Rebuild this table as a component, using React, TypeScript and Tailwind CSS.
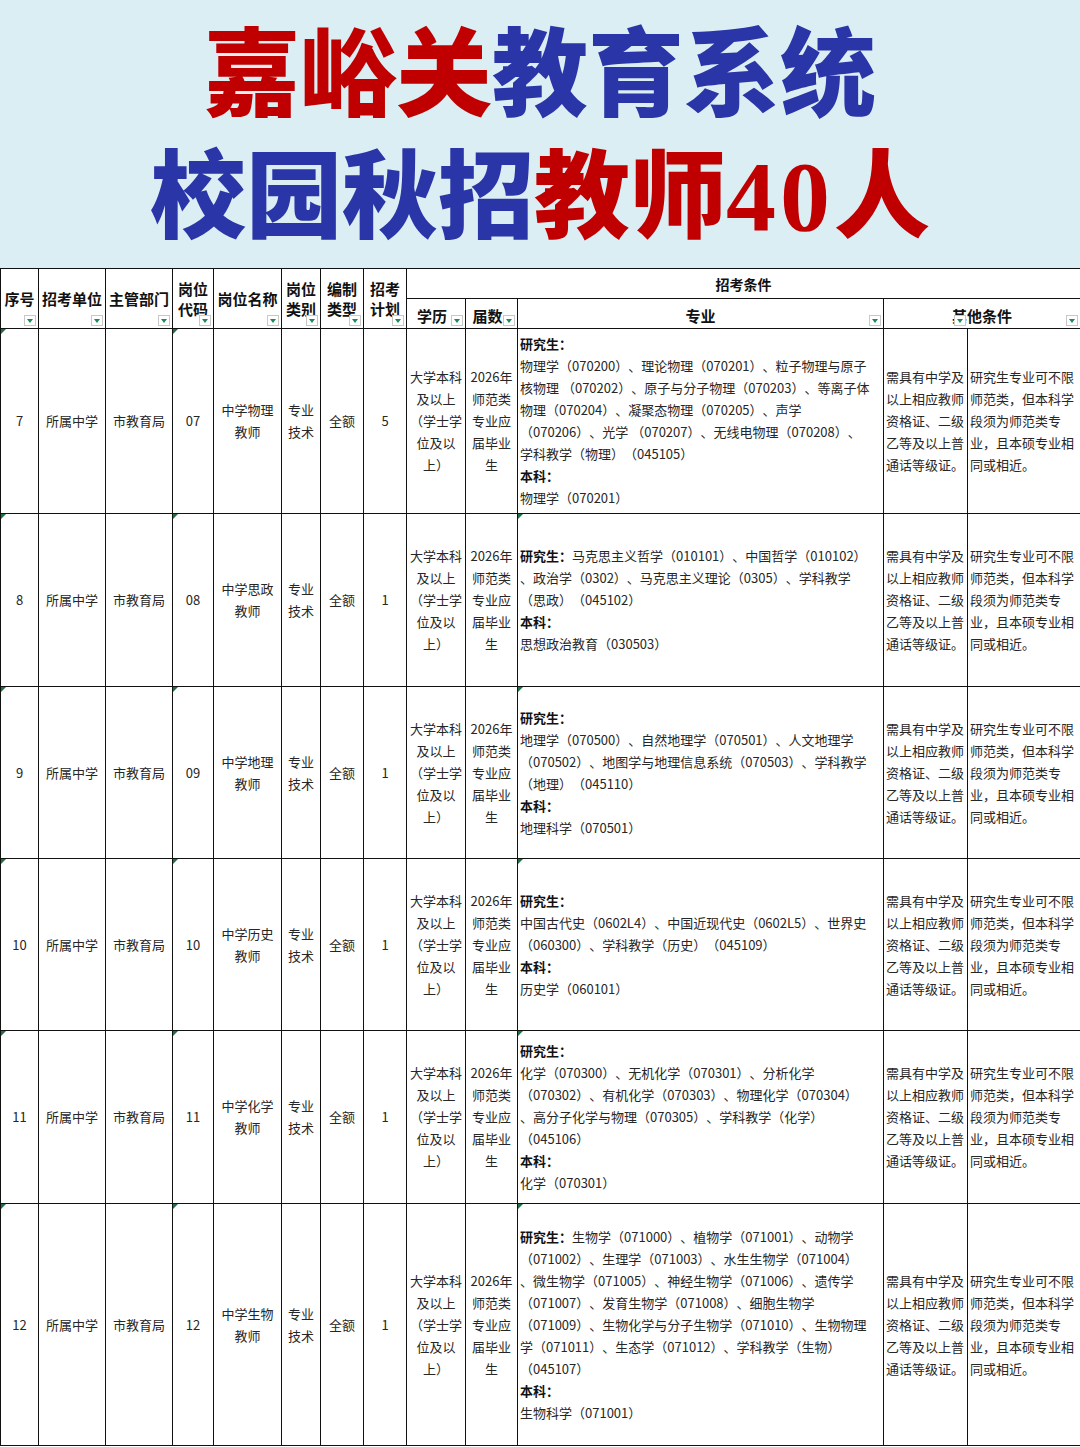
import React from "react";

type Seg = { b?: string; t?: string };

const Filter = () => (
  <span className="absolute right-[2px] bottom-[2px] w-[12px] h-[11px] bg-white border border-[#c8c8c8] flex items-center justify-center">
    <span className="w-0 h-0 border-l-[3px] border-r-[3px] border-t-[4px] border-l-transparent border-r-transparent border-t-[#1e8a5a]" />
  </span>
);

const Corner = () => (
  <span className="absolute left-0 top-0 w-0 h-0 border-t-[5px] border-r-[5px] border-t-[#1e7145] border-r-transparent" />
);

const rows: {
  no: string;
  code: string;
  name: string;
  plan: string;
  h: string;
  corner: boolean;
  major: Seg[];
}[] = [
  {
    no: "7",
    code: "07",
    name: "中学物理",
    plan: "5",
    h: "h-[185px]",
    corner: false,
    major: [
      { b: "研究生：" },
      { t: "物理学（070200）、理论物理（070201）、粒子物理与原子" },
      { t: "核物理 （070202）、原子与分子物理（070203）、等离子体" },
      { t: "物理（070204）、凝聚态物理（070205）、声学" },
      { t: "（070206）、光学 （070207）、无线电物理（070208）、" },
      { t: "学科教学（物理）（045105）" },
      { b: "本科：" },
      { t: "物理学（070201）" },
    ],
  },
  {
    no: "8",
    code: "08",
    name: "中学思政",
    plan: "1",
    h: "h-[173px]",
    corner: true,
    major: [
      { b: "研究生：", t: "马克思主义哲学（010101）、中国哲学（010102）" },
      { t: "、政治学（0302）、马克思主义理论（0305）、学科教学" },
      { t: "（思政）（045102）" },
      { b: "本科：" },
      { t: "思想政治教育（030503）" },
    ],
  },
  {
    no: "9",
    code: "09",
    name: "中学地理",
    plan: "1",
    h: "h-[172px]",
    corner: true,
    major: [
      { b: "研究生：" },
      { t: "地理学（070500）、自然地理学（070501）、人文地理学" },
      { t: "（070502）、地图学与地理信息系统（070503）、学科教学" },
      { t: "（地理）（045110）" },
      { b: "本科：" },
      { t: "地理科学（070501）" },
    ],
  },
  {
    no: "10",
    code: "10",
    name: "中学历史",
    plan: "1",
    h: "h-[172px]",
    corner: true,
    major: [
      { b: "研究生：" },
      { t: "中国古代史（0602L4）、中国近现代史（0602L5）、世界史" },
      { t: "（060300）、学科教学（历史）（045109）" },
      { b: "本科：" },
      { t: "历史学（060101）" },
    ],
  },
  {
    no: "11",
    code: "11",
    name: "中学化学",
    plan: "1",
    h: "h-[173px]",
    corner: true,
    major: [
      { b: "研究生：" },
      { t: "化学（070300）、无机化学（070301）、分析化学" },
      { t: "（070302）、有机化学（070303）、物理化学（070304）" },
      { t: "、高分子化学与物理（070305）、学科教学（化学）" },
      { t: "（045106）" },
      { b: "本科：" },
      { t: "化学（070301）" },
    ],
  },
  {
    no: "12",
    code: "12",
    name: "中学生物",
    plan: "1",
    h: "h-[242px]",
    corner: true,
    major: [
      { b: "研究生：", t: "生物学（071000）、植物学（071001）、动物学" },
      { t: "（071002）、生理学（071003）、水生生物学（071004）" },
      { t: "、微生物学（071005）、神经生物学（071006）、遗传学" },
      { t: "（071007）、发育生物学（071008）、细胞生物学" },
      { t: "（071009）、生物化学与分子生物学（071010）、生物物理" },
      { t: "学（071011）、生态学（071012）、学科教学（生物）" },
      { t: "（045107）" },
      { b: "本科：" },
      { t: "生物科学（071001）" },
    ],
  },
];

const edu = ["大学本科", "及以上", "（学士学", "位及以", "上）"];
const grad = ["2026年", "师范类", "专业应", "届毕业", "生"];
const other1 = ["需具有中学及", "以上相应教师", "资格证、二级", "乙等及以上普", "通话等级证。"];
const other2 = ["研究生专业可不限", "师范类，但本科学", "段须为师范类专", "业，且本硕专业相", "同或相近。"];

const td = "relative border border-[#111] p-0 align-middle";
const th = "relative border border-[#111] p-0 align-middle font-bold text-[15px] leading-[20px] text-[#111]";

export default function App() {
  return (
    <div className="w-[1080px] h-[1447px] bg-white overflow-hidden font-['Noto_Sans_CJK_SC','Noto_Sans',sans-serif]">
      <div className="h-[268px] bg-[#dbeef3] flex flex-col items-center pt-[6px]">
        <div className="h-[122px] text-[96px] leading-[122px] font-black whitespace-nowrap">
          <span className="text-[#c00000]">嘉峪关</span>
          <span className="text-[#2a35a8]">教育系统</span>
        </div>
        <div className="h-[122px] text-[96px] leading-[122px] font-black whitespace-nowrap">
          <span className="text-[#2a35a8]">校园秋招</span>
          <span className="text-[#c00000]">
            教师
            <span className="font-['Liberation_Serif','Times_New_Roman',serif] font-bold text-[100px] tracking-[4px]">40</span>
            人
          </span>
        </div>
      </div>
      <table className="table-fixed border-collapse w-[1080px] text-[13px] leading-[22px] text-[#262626] [text-spacing-trim:space-all]">
        <colgroup>
          <col className="w-[38px]" />
          <col className="w-[67px]" />
          <col className="w-[67px]" />
          <col className="w-[41px]" />
          <col className="w-[68px]" />
          <col className="w-[39px]" />
          <col className="w-[43px]" />
          <col className="w-[43px]" />
          <col className="w-[59px]" />
          <col className="w-[52px]" />
          <col className="w-[366px]" />
          <col className="w-[84px]" />
          <col className="w-[113px]" />
        </colgroup>
        <thead>
          <tr className="h-[30px]">
            <th rowSpan={2} className={th}>
              <div className="text-center">序号</div>
              <Filter />
            </th>
            <th rowSpan={2} className={th}>
              <div className="text-center">招考单位</div>
              <Filter />
            </th>
            <th rowSpan={2} className={th}>
              <div className="text-center">主管部门</div>
              <Filter />
            </th>
            <th rowSpan={2} className={th}>
              <div className="text-center">岗位<br />代码</div>
              <Filter />
            </th>
            <th rowSpan={2} className={th}>
              <div className="text-center">岗位名称</div>
              <Filter />
            </th>
            <th rowSpan={2} className={th}>
              <div className="text-center">岗位<br />类别</div>
              <Filter />
            </th>
            <th rowSpan={2} className={th}>
              <div className="text-center">编制<br />类型</div>
              <Filter />
            </th>
            <th rowSpan={2} className={th}>
              <div className="text-center">招考<br />计划</div>
              <Filter />
            </th>
            <th colSpan={5} className={th}>
              <div className="text-center text-[14px]">招考条件</div>
            </th>
          </tr>
          <tr className="h-[30px]">
            <th className={th}>
              <div className="pt-[4px] text-center pr-[8px]">学历</div>
              <Filter />
            </th>
            <th className={th}>
              <div className="pt-[4px] text-center pr-[8px]">届数</div>
              <Filter />
            </th>
            <th className={th}>
              <div className="pt-[4px] text-center">专业</div>
              <Filter />
            </th>
            <th colSpan={2} className={th}>
              <div className="pt-[4px] text-center">其他条件</div>
              <span className="absolute left-[70px] bottom-[2px] w-[12px] h-[11px] bg-white border border-[#c8c8c8] flex items-center justify-center">
                <span className="w-0 h-0 border-l-[3px] border-r-[3px] border-t-[4px] border-l-transparent border-r-transparent border-t-[#1e8a5a]" />
              </span>
              <Filter />
            </th>
          </tr>
        </thead>
        <tbody>
          {rows.map((r) => (
            <tr key={r.no} className={r.h}>
              <td className={td}>
                <Corner />
                <div className="text-center">{r.no}</div>
              </td>
              <td className={td}>
                <div className="text-center">所属中学</div>
              </td>
              <td className={td}>
                <div className="text-center">市教育局</div>
              </td>
              <td className={td}>
                <Corner />
                <div className="text-center">{r.code}</div>
              </td>
              <td className={td}>
                <div className="text-center">{r.name}</div>
                <div className="text-center">教师</div>
              </td>
              <td className={td}>
                <div className="text-center">专业</div>
                <div className="text-center">技术</div>
              </td>
              <td className={td}>
                <div className="text-center">全额</div>
              </td>
              <td className={td}>
                <div className="text-center">{r.plan}</div>
              </td>
              <td className={td}>
                {edu.map((l) => (
                  <div key={l} className="text-center whitespace-nowrap">{l}</div>
                ))}
              </td>
              <td className={td}>
                {grad.map((l) => (
                  <div key={l} className="text-center whitespace-nowrap">{l}</div>
                ))}
              </td>
              <td className={td}>
                {r.corner && <Corner />}
                <div className="pl-[2px]">
                  {r.major.map((s, i) => (
                    <div key={i} className="whitespace-nowrap">
                      {s.b && <span className="font-bold text-[#111]">{s.b}</span>}
                      {s.t && <span>{s.t}</span>}
                    </div>
                  ))}
                </div>
              </td>
              <td className={td}>
                <div className="pl-[2px]">
                  {other1.map((l) => (
                    <div key={l} className="whitespace-nowrap">{l}</div>
                  ))}
                </div>
              </td>
              <td className={td}>
                <div className="pl-[2px]">
                  {other2.map((l) => (
                    <div key={l} className="whitespace-nowrap">{l}</div>
                  ))}
                </div>
              </td>
            </tr>
          ))}
        </tbody>
      </table>
    </div>
  );
}
